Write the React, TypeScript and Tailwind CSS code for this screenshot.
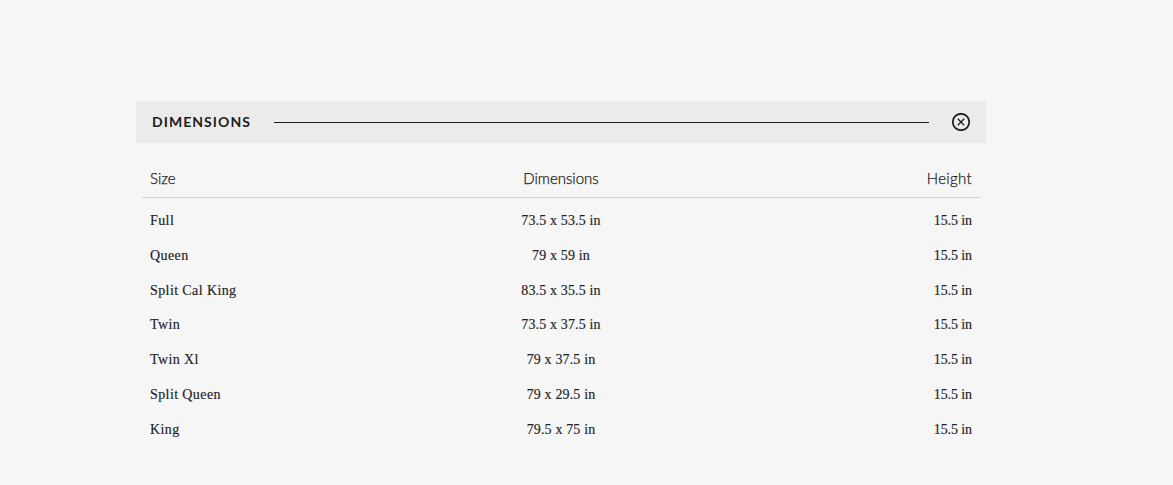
const rows = [
  ["Full", "73.5 x 53.5 in"],
  ["Queen", "79 x 59 in"],
  ["Split Cal King", "83.5 x 35.5 in"],
  ["Twin", "73.5 x 37.5 in"],
  ["Twin Xl", "79 x 37.5 in"],
  ["Split Queen", "79 x 29.5 in"],
  ["King", "79.5 x 75 in"],
];

export default function App() {
  return (
    <div className="min-h-[485px] bg-[#f6f6f6] pt-[101px] pl-[136px]">
      <div className="w-[850px]">
        <div className="flex h-[42px] items-center bg-[#ebebeb] pl-[16px] pr-4">
          <h2 className="w-[99px] font-['Lato',sans-serif] text-[14px] font-bold leading-none tracking-[1.05px] text-[#1c1c1c]">DIMENSIONS</h2>
          <div className="ml-[23px] h-px flex-1 bg-[#1c1c1c]" />
          <button className="ml-[23px] text-[#1c1c1c]" aria-label="Close">
            <svg width="18" height="18" viewBox="0 0 18 18" fill="none" stroke="currentColor" className="block">
              <circle cx="9" cy="9" r="8.2" strokeWidth="1.7" />
              <path d="M5.8 5.8l6.4 6.4M12.2 5.8l-6.4 6.4" strokeWidth="1.3" />
            </svg>
          </button>
        </div>
        <div className="mx-[6px] mt-[18px]">
          <div className="grid h-[37px] grid-cols-[1fr_1fr_1fr] items-center border-b border-[#d0d0d0] px-2 pb-[2px] font-['Lato',sans-serif] text-[15px] font-light text-[#1a1a1a] [-webkit-text-stroke:0.25px]">
            <div>Size</div>
            <div className="text-center">Dimensions</div>
            <div className="text-right tracking-[0.35px]">Height</div>
          </div>
          <div className="pt-[5.15px]">
            {rows.map(([size, dim]) => (
              <div key={size} className="grid h-[34.8px] grid-cols-[1fr_1fr_1fr] items-center px-2 font-['Liberation_Serif',serif] text-[14px] text-[#222222] [-webkit-text-stroke:0.15px]">
                <div className="tracking-[0.4px]">{size}</div>
                <div className="text-center tracking-[0.15px]">{dim}</div>
                <div className="text-right tracking-[-0.1px]">15.5 in</div>
              </div>
            ))}
          </div>
        </div>
      </div>
    </div>
  );
}
